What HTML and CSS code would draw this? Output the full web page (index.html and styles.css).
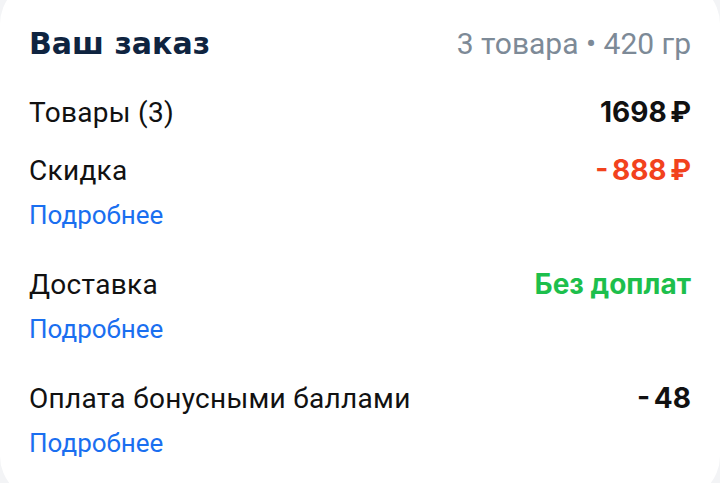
FILE: index.html
```html
<!DOCTYPE html>
<html lang="ru">
<head>
<meta charset="utf-8">
<link rel="stylesheet" href="styles.css">
</head>
<body>
<div class="card">
  <div class="header">
    <h1 class="title">Ваш заказ</h1>
    <span class="meta">3 товара • 420 гр</span>
  </div>
  <div class="row first">
    <span class="label">Товары (3)</span>
    <span class="value">1698 ₽</span>
  </div>
  <div class="group">
    <div class="row">
      <span class="label">Скидка</span>
      <span class="value red">- 888 ₽</span>
    </div>
    <a class="link">Подробнее</a>
  </div>
  <div class="group">
    <div class="row">
      <span class="label">Доставка</span>
      <span class="value green">Без доплат</span>
    </div>
    <a class="link">Подробнее</a>
  </div>
  <div class="group">
    <div class="row">
      <span class="label">Оплата бонусными баллами</span>
      <span class="value">- 48</span>
    </div>
    <a class="link">Подробнее</a>
  </div>
</div>
</body>
</html>
```

FILE: styles.css
```css
html, body {
  margin: 0;
  padding: 0;
  background: #f3f4f6;
  height: 100%;
  overflow: hidden;
}
.card {
  margin-top: -20px;
  background: #ffffff;
  border-radius: 44px;
  padding: 44px 29px 0 29px;
  height: 520px;
  box-sizing: border-box;
  font-family: Roboto, "Noto Sans", sans-serif;
  color: #111111;
}
.header {
  display: flex;
  justify-content: space-between;
  align-items: baseline;
}
.title {
  margin: 0;
  font-family: "DejaVu Sans", Inter, sans-serif;
  font-weight: 700;
  font-size: 30px;
  line-height: 40px;
  color: #0f2440;
}
.meta {
  font-size: 30px;
  line-height: 40px;
  color: #7d8a97;
}
.row {
  display: flex;
  justify-content: space-between;
  align-items: baseline;
}
.row.first {
  margin-top: 31px;
}
.label {
  font-size: 28px;
  line-height: 34px;
  letter-spacing: 0.3px;
}
.value {
  font-family: Inter, Roboto, sans-serif;
  font-weight: 650;
  font-size: 28px;
  line-height: 34px;
  word-spacing: -3px;
}
.red { color: #f2421d; }
.green { color: #1dbf4c; word-spacing: 0; }
.group {
  margin-top: 23px;
  display: flex;
  flex-direction: column;
}
.group + .group {
  margin-top: 36px;
}
.link {
  margin-top: 11px;
  font-size: 26px;
  line-height: 32px;
  color: #1a6ff0;
}
```
